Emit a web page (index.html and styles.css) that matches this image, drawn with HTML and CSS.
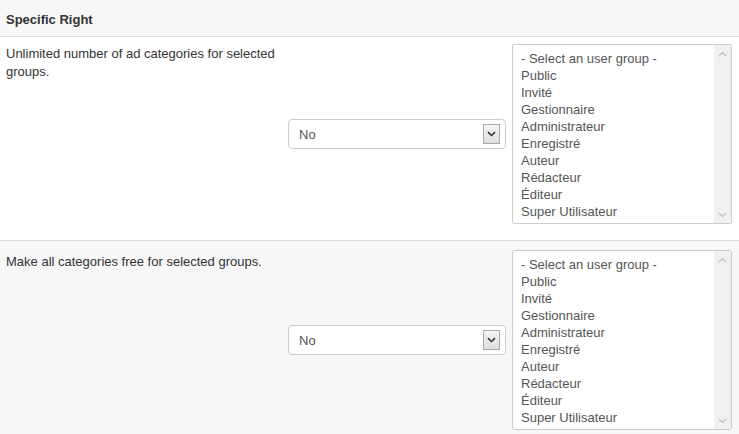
FILE: index.html
```html
<!DOCTYPE html>
<html>
<head>
<meta charset="utf-8">
<link rel="stylesheet" href="styles.css">
</head>
<body>
<div class="panel">
  <div class="panel-head">Specific Right</div>
  <div class="row">
    <div class="label">Unlimited number of ad categories for selected groups.</div>
    <div class="select-cell">
      <div class="dropdown"><span class="value">No</span><span class="arrow"><svg width="9" height="6" viewBox="0 0 9 6"><path d="M1 1.2 L4.5 4.5 L8 1.2" fill="none" stroke="#333" stroke-width="1.6"/></svg></span></div>
    </div>
    <div class="listbox">
      <ul class="options">
        <li>- Select an user group -</li>
        <li>Public</li>
        <li>Invité</li>
        <li>Gestionnaire</li>
        <li>Administrateur</li>
        <li>Enregistré</li>
        <li>Auteur</li>
        <li>Rédacteur</li>
        <li>Éditeur</li>
        <li>Super Utilisateur</li>
      </ul>
      <div class="scrollbar">
        <svg width="9" height="6" viewBox="0 0 9 6"><path d="M1 5 L4.5 1.5 L8 5" fill="none" stroke="#c4c4c4" stroke-width="1.5"/></svg>
        <svg width="9" height="6" viewBox="0 0 9 6"><path d="M1 1 L4.5 4.5 L8 1" fill="none" stroke="#c4c4c4" stroke-width="1.5"/></svg>
      </div>
    </div>
  </div>
  <div class="row alt">
    <div class="label">Make all categories free for selected groups.</div>
    <div class="select-cell">
      <div class="dropdown"><span class="value">No</span><span class="arrow"><svg width="9" height="6" viewBox="0 0 9 6"><path d="M1 1.2 L4.5 4.5 L8 1.2" fill="none" stroke="#333" stroke-width="1.6"/></svg></span></div>
    </div>
    <div class="listbox">
      <ul class="options">
        <li>- Select an user group -</li>
        <li>Public</li>
        <li>Invité</li>
        <li>Gestionnaire</li>
        <li>Administrateur</li>
        <li>Enregistré</li>
        <li>Auteur</li>
        <li>Rédacteur</li>
        <li>Éditeur</li>
        <li>Super Utilisateur</li>
      </ul>
      <div class="scrollbar">
        <svg width="9" height="6" viewBox="0 0 9 6"><path d="M1 5 L4.5 1.5 L8 5" fill="none" stroke="#c4c4c4" stroke-width="1.5"/></svg>
        <svg width="9" height="6" viewBox="0 0 9 6"><path d="M1 1 L4.5 4.5 L8 1" fill="none" stroke="#c4c4c4" stroke-width="1.5"/></svg>
      </div>
    </div>
  </div>
</div>
</body>
</html>
```

FILE: styles.css
```css
* { box-sizing: border-box; }
html, body { margin: 0; padding: 0; background: #fff; }
body {
  font-family: "Liberation Sans", Arial, sans-serif;
  font-size: 13px;
  color: #333;
}
.panel { width: 739px; }
.panel-head {
  height: 37px;
  background: #f7f7f7;
  border-bottom: 1px solid #ddd;
  padding: 11px 6px 0;
  font-weight: bold;
  font-size: 13px;
  line-height: 18px;
  color: #333;
}
.row {
  display: grid;
  grid-template-columns: 276px 218px 220px;
  column-gap: 6px;
  padding: 7px 0 16px 6px;
  border-bottom: 1px solid #ddd;
  background: #fff;
}
.row.alt {
  background: #f7f7f7;
  padding-top: 9px;
  border-bottom: none;
}
.label {
  padding-top: 1px;
  line-height: 18px;
  color: #333;
}
.row.alt .label { padding-top: 3px; }
.select-cell {
  display: flex;
  align-items: center;
}
.dropdown {
  width: 218px;
  height: 30px;
  border: 1px solid #ccc;
  border-radius: 4px;
  background: #fff;
  display: flex;
  align-items: center;
  justify-content: space-between;
  padding: 0 5px 0 10px;
  color: #555;
}
.arrow {
  width: 17px;
  height: 20px;
  border: 1px solid #a9a9a9;
  background: linear-gradient(#f4f4f4, #dedede);
  display: flex;
  align-items: center;
  justify-content: center;
}
.listbox {
  height: 180px;
  border: 1px solid #ccc;
  border-radius: 2px;
  background: #fff;
  display: flex;
}
.options {
  list-style: none;
  margin: 0;
  padding: 5px 0 0 8px;
  flex: 1;
  color: #555;
}
.options li {
  height: 17px;
  line-height: 17px;
  white-space: nowrap;
}
.scrollbar {
  width: 17px;
  background: #f0f0f0;
  display: flex;
  flex-direction: column;
  justify-content: space-between;
  align-items: center;
  padding: 6px 0 5px;
}
```
